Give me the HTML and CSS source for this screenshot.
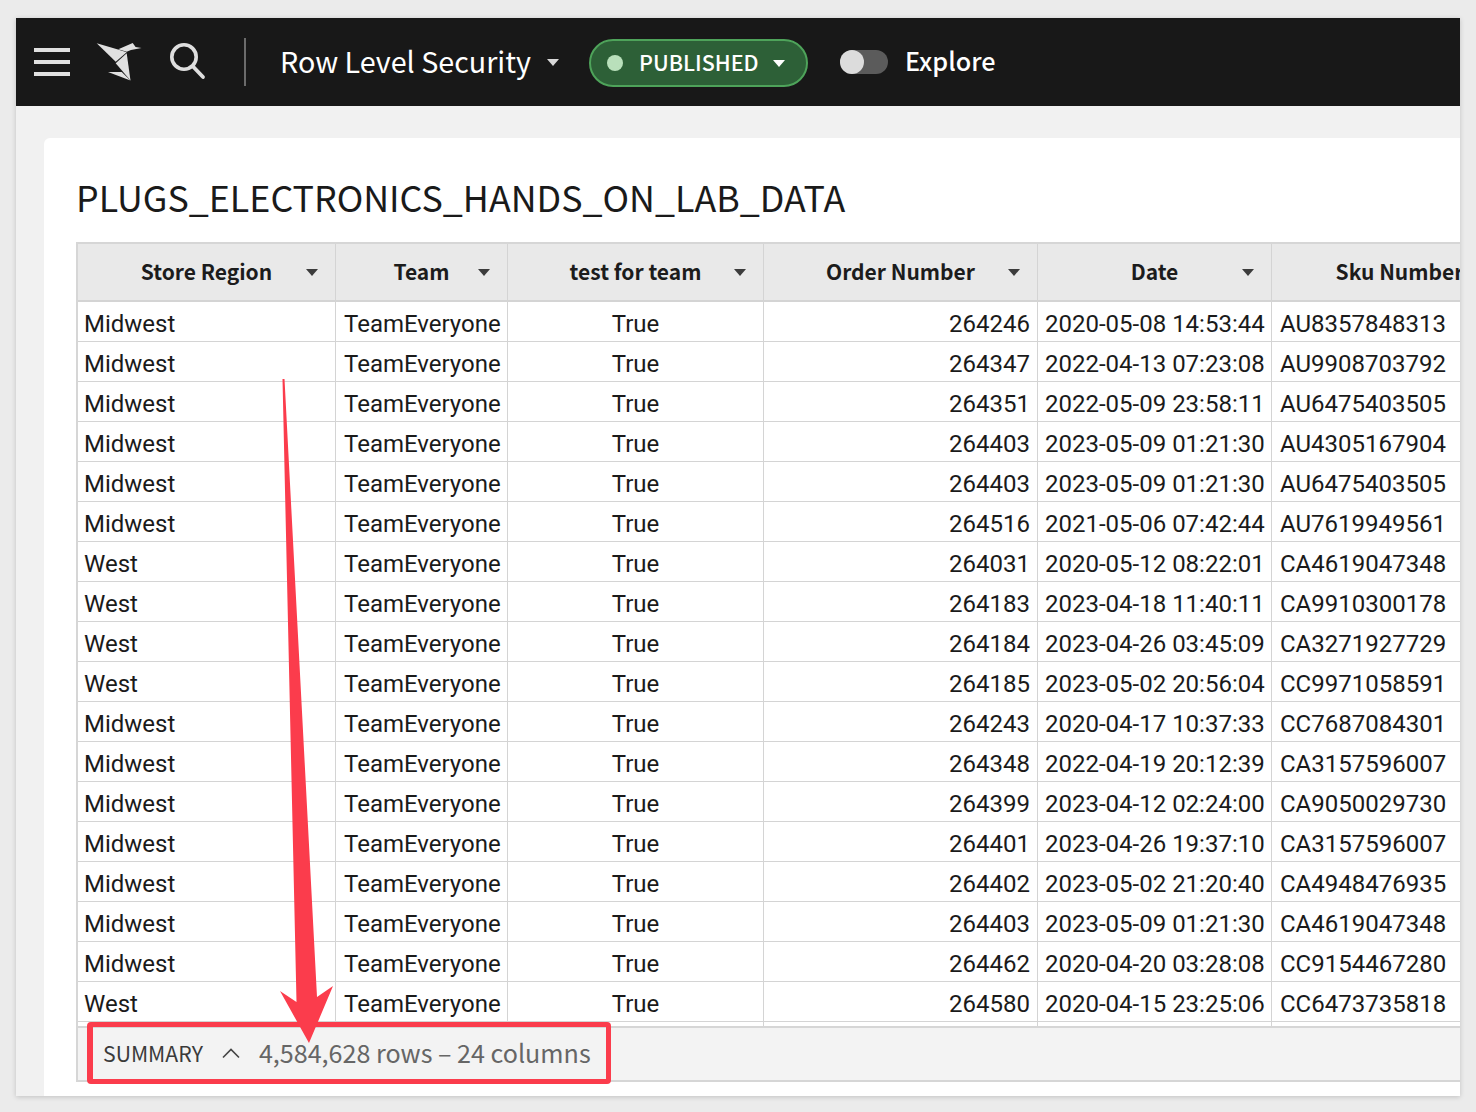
FILE: index.html
```html
<!DOCTYPE html>
<html lang="en">
<head>
<meta charset="utf-8">
<title>Row Level Security</title>
<link rel="stylesheet" href="styles.css">
</head>
<body>
<div class="window">
  <header class="topbar">
    <span class="hamburger"><i></i><i></i><i></i></span>
    <svg class="logo" width="46" height="42" viewBox="0 0 46 42">
      <path fill="#e0e0e0" d="M0.7 2.3 L22 8.6 L30.7 11.3 L19.7 20.7 Z"/>
      <path fill="#e0e0e0" d="M22.3 8.3 L36.7 2 L39.6 6 L45.5 7 L35 9 L30.7 10.7 Z"/>
      <path fill="#e0e0e0" d="M19.7 22.3 L30.7 12.3 L34.5 39.5 Z"/>
      <path fill="#e0e0e0" d="M12 31 L25.7 31 L34.5 39.5 Z"/>
    </svg>
    <svg class="search" width="40" height="40" viewBox="0 0 40 40">
      <circle cx="16" cy="15" r="12.2" fill="none" stroke="#dedede" stroke-width="3.6"/>
      <path d="M25 24.5 L35 35" stroke="#dedede" stroke-width="3.8" stroke-linecap="round"/>
    </svg>
    <span class="divider"></span>
    <span class="doc-title">Row Level Security</span>
    <span class="caret caret-doc"></span>
    <span class="badge"><span class="dot"></span><span class="badge-label">PUBLISHED</span><span class="caret caret-badge"></span></span>
    <span class="toggle"><span class="knob"></span></span>
    <span class="explore">Explore</span>
  </header>
  <main class="content">
    <section class="card">
      <h1 class="title">PLUGS_ELECTRONICS_HANDS_ON_LAB_DATA</h1>
      <div class="grid">
        <table class="data">
          <colgroup>
            <col class="c1"><col class="c2"><col class="c3"><col class="c4"><col class="c5"><col class="c6">
          </colgroup>
          <thead>
            <tr>
              <th>Store Region<span class="caret caret-th"></span></th>
              <th>Team<span class="caret caret-th"></span></th>
              <th>test for team<span class="caret caret-th"></span></th>
              <th>Order Number<span class="caret caret-th"></span></th>
              <th>Date<span class="caret caret-th"></span></th>
              <th>Sku Number<span class="caret caret-th"></span></th>
            </tr>
          </thead>
          <tbody>
            <tr><td>Midwest</td><td>TeamEveryone</td><td>True</td><td>264246</td><td>2020-05-08 14:53:44</td><td>AU8357848313</td></tr>
            <tr><td>Midwest</td><td>TeamEveryone</td><td>True</td><td>264347</td><td>2022-04-13 07:23:08</td><td>AU9908703792</td></tr>
            <tr><td>Midwest</td><td>TeamEveryone</td><td>True</td><td>264351</td><td>2022-05-09 23:58:11</td><td>AU6475403505</td></tr>
            <tr><td>Midwest</td><td>TeamEveryone</td><td>True</td><td>264403</td><td>2023-05-09 01:21:30</td><td>AU4305167904</td></tr>
            <tr><td>Midwest</td><td>TeamEveryone</td><td>True</td><td>264403</td><td>2023-05-09 01:21:30</td><td>AU6475403505</td></tr>
            <tr><td>Midwest</td><td>TeamEveryone</td><td>True</td><td>264516</td><td>2021-05-06 07:42:44</td><td>AU7619949561</td></tr>
            <tr><td>West</td><td>TeamEveryone</td><td>True</td><td>264031</td><td>2020-05-12 08:22:01</td><td>CA4619047348</td></tr>
            <tr><td>West</td><td>TeamEveryone</td><td>True</td><td>264183</td><td>2023-04-18 11:40:11</td><td>CA9910300178</td></tr>
            <tr><td>West</td><td>TeamEveryone</td><td>True</td><td>264184</td><td>2023-04-26 03:45:09</td><td>CA3271927729</td></tr>
            <tr><td>West</td><td>TeamEveryone</td><td>True</td><td>264185</td><td>2023-05-02 20:56:04</td><td>CC9971058591</td></tr>
            <tr><td>Midwest</td><td>TeamEveryone</td><td>True</td><td>264243</td><td>2020-04-17 10:37:33</td><td>CC7687084301</td></tr>
            <tr><td>Midwest</td><td>TeamEveryone</td><td>True</td><td>264348</td><td>2022-04-19 20:12:39</td><td>CA3157596007</td></tr>
            <tr><td>Midwest</td><td>TeamEveryone</td><td>True</td><td>264399</td><td>2023-04-12 02:24:00</td><td>CA9050029730</td></tr>
            <tr><td>Midwest</td><td>TeamEveryone</td><td>True</td><td>264401</td><td>2023-04-26 19:37:10</td><td>CA3157596007</td></tr>
            <tr><td>Midwest</td><td>TeamEveryone</td><td>True</td><td>264402</td><td>2023-05-02 21:20:40</td><td>CA4948476935</td></tr>
            <tr><td>Midwest</td><td>TeamEveryone</td><td>True</td><td>264403</td><td>2023-05-09 01:21:30</td><td>CA4619047348</td></tr>
            <tr><td>Midwest</td><td>TeamEveryone</td><td>True</td><td>264462</td><td>2020-04-20 03:28:08</td><td>CC9154467280</td></tr>
            <tr><td>West</td><td>TeamEveryone</td><td>True</td><td>264580</td><td>2020-04-15 23:25:06</td><td>CC6473735818</td></tr>
            <tr class="stub"><td></td><td></td><td></td><td></td><td></td><td></td></tr>
          </tbody>
        </table>
        <footer class="summary">
          <span class="summary-label">SUMMARY</span>
          <svg class="chevron" width="20" height="12" viewBox="0 0 20 12"><path d="M2 10.5 L10 2.5 L18 10.5" fill="none" stroke="#444" stroke-width="1.6"/></svg>
          <span class="summary-count">4,584,628 rows – 24 columns</span>
        </footer>
      </div>
    </section>
  </main>
</div>
<div class="callout"></div>
<svg class="arrow" width="70" height="680" viewBox="0 0 70 680">
  <path fill="#fb3c4c" d="M11.5 0 L13.5 0 L46 618 L62 607 L38 664 L9 612 L25.5 623 Z"/>
</svg>
</body>
</html>
```
FILE: styles.css
```css
* { box-sizing: border-box; }
html, body { margin: 0; height: 100%; }
body {
  position: relative;
  width: 1476px;
  height: 1112px;
  overflow: hidden;
  background: #ebebeb;
  padding: 18px 16px 16px;
  font-family: "Noto Sans CJK SC", "Noto Sans", sans-serif;
}
.window {
  height: 1078px;
  display: flex;
  flex-direction: column;
  background: #f1f1f1;
  box-shadow: 0 1px 5px rgba(0,0,0,.18);
  overflow: hidden;
}
.topbar {
  flex: 0 0 88px;
  display: flex;
  align-items: center;
  background: #181818;
  padding-left: 18px;
  color: #fff;
}
.hamburger { display: flex; flex-direction: column; gap: 8px; width: 36px; }
.hamburger i { display: block; height: 4px; background: #e0e0e0; }
.logo { margin-left: 26px; flex: none; }
.search { margin-left: 26px; flex: none; }
.divider { width: 2px; height: 48px; background: #6b6b6b; margin-left: 36px; }
.doc-title { margin: 0 0 2px 34px; font-size: 28.7px; line-height: 40px; white-space: nowrap; }
.caret { display: inline-block; width: 0; height: 0; border-style: solid; border-color: currentColor transparent transparent; }
.caret-doc { margin-left: 16px; border-width: 7px 6.5px 0; color: #d8d8d8; }
.badge {
  margin: 2px 0 0 30px;
  height: 48px;
  width: 219px;
  flex: none;
  display: flex;
  align-items: center;
  background: #2d6037;
  border: 2px solid #4ea35a;
  border-radius: 24px;
  padding-left: 16px;
  font-size: 21.5px;
  font-weight: 500;
  color: #fff;
}
.badge-label { margin-bottom: 3px; }
.dot { width: 16px; height: 16px; border-radius: 50%; background: #b9e0bb; margin-right: 16px; }
.caret-badge { margin-left: 14px; border-width: 7px 6.5px 0; }
.toggle {
  margin-left: 32px;
  width: 48px;
  height: 24px;
  background: #5b5b5b;
  border-radius: 12px;
  flex: none;
}
.knob { display: block; width: 24px; height: 24px; border-radius: 50%; background: #dcdcdc; }
.explore { margin: 0 0 4px 17px; font-size: 25.2px; font-weight: 500; line-height: 36px; }
.content { flex: 1; min-height: 0; padding: 32px 0 0 28px; }
.card {
  height: 958px;
  background: #fff;
  border-radius: 6px 0 0 0;
  padding: 31px 0 0 32px;
  overflow: hidden;
}
.title {
  margin: 0 0 19px 0;
  font-size: 35.8px;
  line-height: 54px;
  font-weight: 400;
  color: #1a1a1a;
  white-space: nowrap;
}
.grid {
  height: 840px;
  width: 1452px;
  border: 2px solid #d6d6d6;
  display: flex;
  flex-direction: column;
  overflow: hidden;
}
.data {
  table-layout: fixed;
  border-collapse: separate;
  border-spacing: 0;
  width: 1450px;
  flex: none;
}
.c1 { width: 258px; }
.c2 { width: 172px; }
.c3 { width: 256px; }
.c4 { width: 274px; }
.c5 { width: 234px; }
.c6 { width: 256px; }
.data th {
  position: relative;
  height: 58px;
  padding: 0 0 3px;
  background: #e9e9e9;
  border-right: 1px solid #d4d4d4;
  border-bottom: 2px solid #d4d4d4;
  font-size: 21px;
  font-weight: 600;
  color: #1c1c1c;
  text-align: center;
  white-space: nowrap;
}
.caret-th {
  position: absolute;
  right: 17px;
  top: 25px;
  border-width: 7px 6.5px 0;
  color: #3c3c3c;
}
.data td {
  height: 40px;
  padding: 5px 7px 0;
  border-right: 1px solid #d4d4d4;
  border-bottom: 1px solid #d4d4d4;
  font-family: Roboto, "Liberation Sans", sans-serif;
  font-size: 24px;
  line-height: 34px;
  color: #1a1a1a;
  white-space: nowrap;
  overflow: hidden;
}
.data td:nth-child(1) { padding-left: 6px; }
.data td:nth-child(2) { padding-left: 8px; }
.data td:nth-child(3) { text-align: center; }
.data td:nth-child(4) { text-align: right; }
.data td:nth-child(6) { padding-left: 8px; }
.data .stub td { height: 4px; padding: 0; border-bottom: 0; line-height: 0; }
.summary {
  flex: 1;
  display: flex;
  align-items: center;
  background: #f3f3f3;
  border-top: 2px solid #d6d6d6;
  padding: 0 0 2px 25px;
  white-space: nowrap;
}
.summary-label { font-size: 21.2px; color: #3a3a3a; margin-bottom: 2px; }
.chevron { margin-left: 18px; }
.summary-count { margin: 0 0 2px 18px; font-size: 25.1px; color: #666; }
.callout {
  position: absolute;
  left: 87px;
  top: 1022px;
  width: 524px;
  height: 62px;
  border: 5px solid #fb3c4c;
  border-left-width: 6px;
  border-radius: 4px;
}
.arrow { position: absolute; left: 271px; top: 379px; }
```
